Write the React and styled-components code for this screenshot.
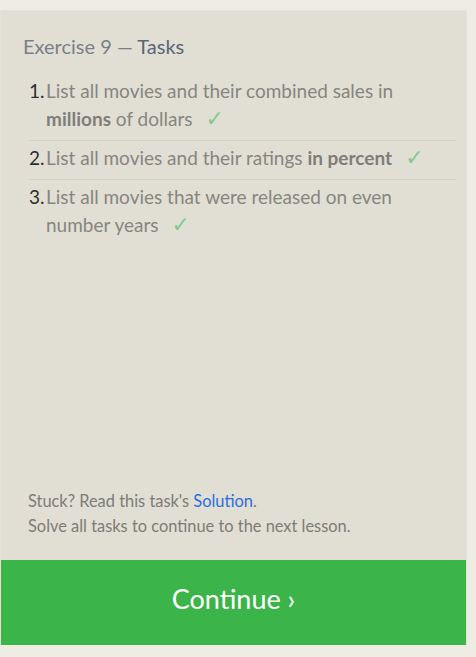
import React from "react";
import styled, { createGlobalStyle } from "styled-components";

const Global = createGlobalStyle`
  html, body { margin: 0; padding: 0; background: #efece4; }
  body { font-family: Lato, "Open Sans", sans-serif; }
`;

const Page = styled.div`
  padding-top: 10px;
  width: 467px;
`;

const Panel = styled.div`
  box-sizing: border-box;
  width: 467px;
  height: 635px;
  background: #e1dfd4;
  border: 1px solid #e5e3d9;
  border-bottom: none;
  display: flex;
  flex-direction: column;
`;

const Body = styled.div`
  flex: 1;
  display: flex;
  flex-direction: column;
  padding: 23px 10px 0 22px;
`;

const Title = styled.h2`
  margin: 0;
  font-size: 20px;
  font-weight: 400;
  color: #7a7f87;
  line-height: 24px;
`;

const Strong = styled.span`
  color: #596577;
`;

const List = styled.ol`
  margin: 19px 0 0 0;
  padding: 0;
  list-style: none;
`;

const Item = styled.li`
  display: flex;
  margin-left: 6px;
  padding: ${(p) => (p.$first ? "0" : "3px")} 0 7px 0;
  border-bottom: ${(p) => (p.$last ? "none" : "1px solid #d5d3c8")};
`;

const Num = styled.span`
  width: 17px;
  flex: none;
  color: #2e2e2e;
  font-size: 19px;
  line-height: 28px;
`;

const Text = styled.span`
  color: #878580;
  font-size: 19px;
  line-height: 28px;
  b { font-weight: 700; color: #7f7d78; }
`;

const Check = styled.span`
  font-family: "DejaVu Sans", sans-serif;
  font-size: 22px;
  line-height: 0;
  color: #82ca8f;
  margin-left: 13px;
`;

const Footer = styled.div`
  margin-top: auto;
  padding: 0 0 22px 5px;
  font-size: 16.4px;
  line-height: 25px;
  color: #7e7b76;
`;

const Link = styled.a`
  color: #2b6de0;
  text-decoration: none;
`;

const Continue = styled.button`
  flex: none;
  height: 85px;
  width: 100%;
  border: none;
  background: #3bb54a;
  color: #fff;
  font-family: Lato, "Open Sans", sans-serif;
  font-size: 27px;
  padding: 0 0 8px 0;
  cursor: pointer;
`;

export default function App() {
  return (
    <>
      <Global />
      <Page>
        <Panel>
          <Body>
            <Title>
              Exercise 9 — <Strong>Tasks</Strong>
            </Title>
            <List>
              <Item $first>
                <Num>1.</Num>
                <Text>
                  List all movies and their combined sales in <b>millions</b> of dollars
                  <Check>✓</Check>
                </Text>
              </Item>
              <Item>
                <Num>2.</Num>
                <Text>
                  List all movies and their ratings <b>in percent</b>
                  <Check>✓</Check>
                </Text>
              </Item>
              <Item $last>
                <Num>3.</Num>
                <Text>
                  List all movies that were released on even number years
                  <Check>✓</Check>
                </Text>
              </Item>
            </List>
            <Footer>
              Stuck? Read this task's <Link href="#">Solution</Link>.
              <br />
              Solve all tasks to continue to the next lesson.
            </Footer>
          </Body>
          <Continue>Continue ›</Continue>
        </Panel>
      </Page>
    </>
  );
}
